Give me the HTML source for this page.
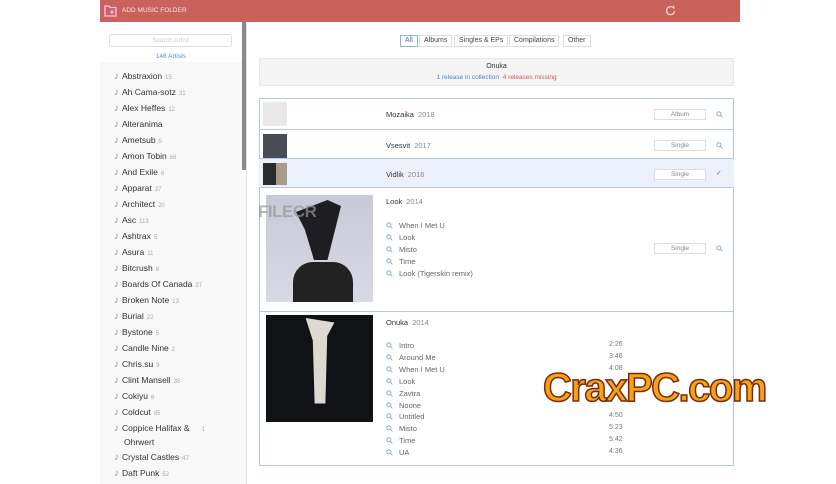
<!DOCTYPE html>
<html><head><meta charset="utf-8"><style>
*{margin:0;padding:0;box-sizing:border-box}
body{width:836px;height:484px;background:#fff;font-family:"Liberation Sans",sans-serif;position:relative;overflow:hidden;color:#333}
.a{position:absolute}
#hdr{left:100px;top:0;width:640px;height:22px;background:#c8625b}
#side{left:100px;top:22px;width:146px;height:462px;background:#f8f8f8}
#sb{left:242px;top:22px;width:4px;height:148px;background:#8a8a8a}
#sline{left:246px;top:22px;width:1px;height:462px;background:#e4e4e4}
.art{position:absolute;left:114px;font-size:8.5px;color:#333;white-space:nowrap}
.art .n{color:#aaa;font-size:6px;margin-left:3px}
.art .m{color:#7f95d0;margin-right:3px;font-size:10px}
.seg{top:35px;height:12px;border:1px solid #ddd;font-size:7px;line-height:10px;padding:0 4px;color:#444;background:#fff}
.row{left:259px;width:475px;border-bottom:1px solid #b4c6ea;}
.t{font-size:7.5px;color:#333}
.t .y{color:#888;margin-left:4px}
.btn{left:654px;width:52px;height:11px;border:1px solid #ddd;font-size:6.5px;color:#888;text-align:center;line-height:9px;background:#fff}
.trk{position:absolute;left:386px;font-size:7.5px;color:#666;padding-left:13px}
.trk svg,.q{position:absolute;left:0;top:1px}
.dur{position:absolute;left:609px;font-size:7px;color:#777}
</style></head><body>
<svg width="0" height="0" style="position:absolute"><defs><symbol id="mg" viewBox="0 0 8 8"><circle cx="3.3" cy="3.3" r="2.4" fill="none" stroke="#7aa0dc" stroke-width="1"/><path d="M5 5l2.3 2.3" stroke="#7aa0dc" stroke-width="1"/></symbol></defs></svg>
<div class="a" id="hdr"></div>
<svg class="a" style="left:104px;top:5px" width="14" height="12" viewBox="0 0 14 12"><path d="M1 1h4l1 1.5h6v8.5H1z" fill="none" stroke="#fbe" stroke-width="1.3"/><path d="M8 5v4M6 7h4" stroke="#fbe" stroke-width="1.2"/></svg>
<div class="a" style="left:122px;top:7px;font-size:6.5px;color:#fde6e4">ADD MUSIC FOLDER</div>
<svg class="a" style="left:665px;top:5px" width="11" height="11" viewBox="0 0 11 11"><path d="M8.5 3A4 4 0 1 0 9.5 6.5" fill="none" stroke="#f6d4d0" stroke-width="1.3"/><path d="M6.5 1.5L9 3 8.5 0.5" fill="none" stroke="#f6d4d0" stroke-width="1"/></svg>
<div class="a" id="side"></div>
<div class="a" style="left:100px;top:22px;width:142px;height:40px;background:#fff"></div>
<div class="a" style="left:109px;top:34px;width:123px;height:13px;border:1px solid #ddd;border-radius:3px;background:#fff;font-size:6.5px;color:#ccc;text-align:center;line-height:11px">Search Artist</div>
<div class="a" style="left:100px;top:53px;width:142px;text-align:center;font-size:6.5px;color:#5a8fd8">146 Artists</div>
<div class="a" id="sb"></div><div class="a" id="sline"></div>
<div class="art" style="top:71px"><span class="m">♪</span>Abstraxion<span class="n">15</span></div>
<div class="art" style="top:87px"><span class="m">♪</span>Ah Cama-sotz<span class="n">31</span></div>
<div class="art" style="top:103px"><span class="m">♪</span>Alex Heffes<span class="n">12</span></div>
<div class="art" style="top:119px"><span class="m">♪</span>Alteranima</div>
<div class="art" style="top:135px"><span class="m">♪</span>Ametsub<span class="n">5</span></div>
<div class="art" style="top:151px"><span class="m">♪</span>Amon Tobin<span class="n">66</span></div>
<div class="art" style="top:167px"><span class="m">♪</span>And Exile<span class="n">6</span></div>
<div class="art" style="top:183px"><span class="m">♪</span>Apparat<span class="n">37</span></div>
<div class="art" style="top:199px"><span class="m">♪</span>Architect<span class="n">20</span></div>
<div class="art" style="top:215px"><span class="m">♪</span>Asc<span class="n">113</span></div>
<div class="art" style="top:231px"><span class="m">♪</span>Ashtrax<span class="n">5</span></div>
<div class="art" style="top:247px"><span class="m">♪</span>Asura<span class="n">11</span></div>
<div class="art" style="top:263px"><span class="m">♪</span>Bitcrush<span class="n">8</span></div>
<div class="art" style="top:279px"><span class="m">♪</span>Boards Of Canada<span class="n">27</span></div>
<div class="art" style="top:295px"><span class="m">♪</span>Broken Note<span class="n">13</span></div>
<div class="art" style="top:311px"><span class="m">♪</span>Burial<span class="n">22</span></div>
<div class="art" style="top:327px"><span class="m">♪</span>Bystone<span class="n">5</span></div>
<div class="art" style="top:343px"><span class="m">♪</span>Candle Nine<span class="n">2</span></div>
<div class="art" style="top:359px"><span class="m">♪</span>Chris.su<span class="n">9</span></div>
<div class="art" style="top:375px"><span class="m">♪</span>Clint Mansell<span class="n">35</span></div>
<div class="art" style="top:391px"><span class="m">♪</span>Cokiyu<span class="n">6</span></div>
<div class="art" style="top:407px"><span class="m">♪</span>Coldcut<span class="n">85</span></div>
<div class="art" style="top:423px"><span class="m">♪</span>Coppice Halifax &amp;<span class="n" style="margin-left:12px">1</span></div>
<div class="art" style="top:437px;left:124px">Ohrwert</div>
<div class="art" style="top:452px"><span class="m">♪</span>Crystal Castles<span class="n">47</span></div>
<div class="art" style="top:468px"><span class="m">♪</span>Daft Punk<span class="n">52</span></div>
<div class="a seg" style="left:400px;border-color:#8fb2e6;color:#3a73c8">All</div>
<div class="a seg" style="left:419px">Albums</div>
<div class="a seg" style="left:454px">Singles &amp; EPs</div>
<div class="a seg" style="left:509px">Compilations</div>
<div class="a seg" style="left:563px">Other</div>
<div class="a" style="left:259px;top:58px;width:475px;height:28px;background:#f4f4f4;border:1px solid #e6e6e6"></div>
<div class="a" style="left:259px;top:63px;width:475px;text-align:center;font-size:7px;color:#333">Onuka</div>
<div class="a" style="left:259px;top:74px;width:475px;text-align:center;font-size:6.5px"><span style="color:#4a86d6">1 release in collection</span> <span style="color:#d9534f;margin-left:2px">4 releases missing</span></div>
<div class="a" style="left:259px;top:98px;width:475px;height:368px;border:1px solid #b4c6ea"></div>
<div class="a row" style="top:98px;height:32px"></div>
<div class="a row" style="top:130px;height:29px"></div>
<div class="a row" style="top:159px;height:29px;background:#eaf1fb"></div>
<div class="a row" style="top:188px;height:124px"></div>
<div class="a" style="left:263px;top:102px;width:24px;height:24px;background:#e8e8e8"></div>
<div class="a" style="left:263px;top:134px;width:24px;height:24px;background:#4a4c55"></div>
<div class="a" style="left:263px;top:163px;width:24px;height:22px;background:linear-gradient(90deg,#2a2c30 55%,#a89a86 55%)"></div>
<div class="a t" style="left:386px;top:110px">Mozaika<span class="y">2018</span></div>
<div class="a t" style="left:386px;top:141px">Vsesvit<span class="y">2017</span></div>
<div class="a t" style="left:386px;top:170px">Vidlik<span class="y">2016</span></div>
<div class="a btn" style="top:109px">Album</div>
<div class="a btn" style="top:140px">Single</div>
<div class="a btn" style="top:169px">Single</div>
<svg class="a" style="left:716px;top:111px" width="7" height="7"><use href="#mg" style="--c:#777"/></svg>
<svg class="a" style="left:716px;top:142px" width="7" height="7"><use href="#mg"/></svg>
<div class="a" style="left:716px;top:169px;font-size:7px;color:#777">✓</div>
<div class="a" style="left:266px;top:195px;width:107px;height:107px;background:linear-gradient(#c8c9d6,#d8d9e4)"></div>
<div class="a" style="left:296px;top:200px;width:45px;height:60px;background:#1e1e22;clip-path:polygon(0 20%,70% 0,100% 10%,70% 100%,40% 100%,20% 50%)"></div>
<div class="a" style="left:293px;top:262px;width:60px;height:40px;background:#222;border-radius:20px 20px 0 0"></div>
<div class="a t" style="left:386px;top:197px">Look<span class="y">2014</span></div>
<div class="trk" style="top:221px"><svg width="7" height="7"><use href="#mg"/></svg>When I Met U</div>
<div class="trk" style="top:233px"><svg width="7" height="7"><use href="#mg"/></svg>Look</div>
<div class="trk" style="top:245px"><svg width="7" height="7"><use href="#mg"/></svg>Misto</div>
<div class="trk" style="top:257px"><svg width="7" height="7"><use href="#mg"/></svg>Time</div>
<div class="trk" style="top:269px"><svg width="7" height="7"><use href="#mg"/></svg>Look (Tigerskin remix)</div>
<div class="a btn" style="top:243px">Single</div>
<svg class="a" style="left:716px;top:245px" width="7" height="7"><use href="#mg"/></svg>
<div class="a" style="left:266px;top:315px;width:107px;height:107px;background:#111216"></div>
<div class="a" style="left:302px;top:318px;width:36px;height:90px;background:#ddd8d0;clip-path:polygon(10% 0,90% 5%,70% 20%,65% 95%,35% 95%,30% 25%)"></div>
<div class="a t" style="left:386px;top:318px">Onuka<span class="y">2014</span></div>
<div class="trk" style="top:341px"><svg width="7" height="7"><use href="#mg"/></svg>Intro</div><div class="dur" style="top:341px">2:26</div>
<div class="trk" style="top:353px"><svg width="7" height="7"><use href="#mg"/></svg>Around Me</div><div class="dur" style="top:353px">3:46</div>
<div class="trk" style="top:365px"><svg width="7" height="7"><use href="#mg"/></svg>When I Met U</div><div class="dur" style="top:365px">4:08</div>
<div class="trk" style="top:377px"><svg width="7" height="7"><use href="#mg"/></svg>Look</div>
<div class="trk" style="top:389px"><svg width="7" height="7"><use href="#mg"/></svg>Zavtra</div>
<div class="trk" style="top:401px"><svg width="7" height="7"><use href="#mg"/></svg>Noone</div>
<div class="trk" style="top:412px"><svg width="7" height="7"><use href="#mg"/></svg>Untitled</div><div class="dur" style="top:412px">4:50</div>
<div class="trk" style="top:424px"><svg width="7" height="7"><use href="#mg"/></svg>Misto</div><div class="dur" style="top:424px">5:23</div>
<div class="trk" style="top:436px"><svg width="7" height="7"><use href="#mg"/></svg>Time</div><div class="dur" style="top:436px">5:42</div>
<div class="trk" style="top:448px"><svg width="7" height="7"><use href="#mg"/></svg>UA</div><div class="dur" style="top:448px">4:36</div>
<div class="a" style="left:258px;top:202px;font-size:17px;font-weight:bold;color:rgba(150,150,150,.7);letter-spacing:-0.5px">FILECR</div>
<div class="a" style="left:543px;top:366px;font-size:40px;font-weight:bold;color:#f5a21a;-webkit-text-stroke:1.5px #7a2a08;letter-spacing:-1.5px;font-family:'Liberation Sans',sans-serif">CraxPC.com</div>
</body></html>
